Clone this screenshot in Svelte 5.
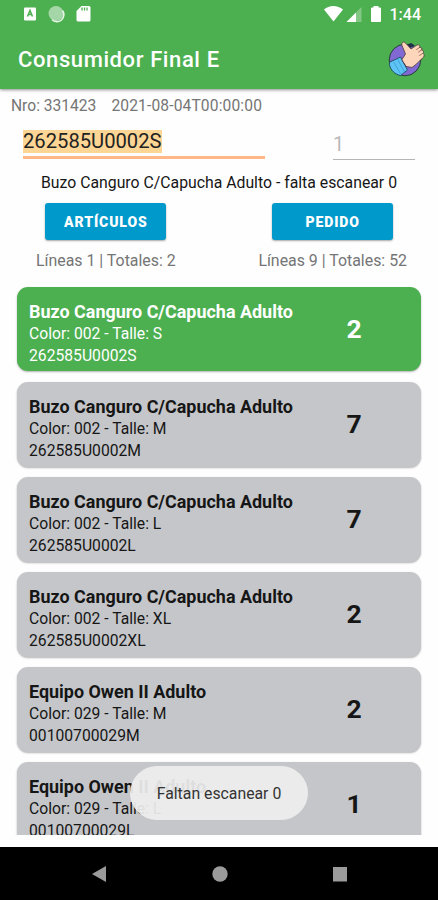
<script lang="ts">
  type Item = {
    name: string;
    color: string;
    size: string;
    code: string;
    pending: number;
    active?: boolean;
  };

  let code = '262585U0002S';
  let message = 'Buzo Canguro C/Capucha Adulto - falta escanear 0';
  let toast = 'Faltan escanear 0';

  const items: Item[] = [
    { name: 'Buzo Canguro C/Capucha Adulto', color: '002', size: 'S', code: '262585U0002S', pending: 2, active: true },
    { name: 'Buzo Canguro C/Capucha Adulto', color: '002', size: 'M', code: '262585U0002M', pending: 7 },
    { name: 'Buzo Canguro C/Capucha Adulto', color: '002', size: 'L', code: '262585U0002L', pending: 7 },
    { name: 'Buzo Canguro C/Capucha Adulto', color: '002', size: 'XL', code: '262585U0002XL', pending: 2 },
    { name: 'Equipo Owen II Adulto', color: '029', size: 'M', code: '00100700029M', pending: 2 },
    { name: 'Equipo Owen II Adulto', color: '029', size: 'L', code: '00100700029L', pending: 1 }
  ];
</script>

<div class="screen">
  <header>
    <div class="status">
      <svg width="72" height="18" viewBox="0 0 72 18">
        <rect x="1" y="2.500" width="12" height="13" rx="1" fill="#fff" />
        <path d="M4.500 11.500 7 5.500l2.500 6M5.500 9.500h3" fill="none" stroke="#4caf50" stroke-width="1.500" />
        <circle cx="33" cy="8.500" r="7.500" fill="#a5d6a7" />
        <path d="M39.500 5.500A7 7 0 0 1 29 14.700" fill="none" stroke="#e8f5e9" stroke-width="1.500" />
        <path d="M58.500 1H66a1.500 1.500 0 0 1 1.500 1.500V15a1.500 1.500 0 0 1-1.500 1.500H55a1.500 1.500 0 0 1-1.500-1.500V6z" fill="#fff" />
        <path d="M59 2.500v3M61.500 2.500v3M64 2.500v3" stroke="#4caf50" stroke-width="1.300" />
      </svg>
      <div class="status-right">
        <svg width="60" height="18" viewBox="0 0 60 18">
          <path d="M1 4.500C6-.2 14.500-.2 20 4.500L10.500 16.500z" fill="#fff" />
          <path d="M38.500 2v15h-15z" fill="#fff" fill-opacity=".3" />
          <path d="M33 7.500V17h-9.500z" fill="#fff" />
          <path d="M50.500 1h5v1.500H57a1 1 0 0 1 1 1V16a1 1 0 0 1-1 1h-8a1 1 0 0 1-1-1V3.500a1 1 0 0 1 1-1h1.500z" fill="#fff" />
        </svg>
        <span class="clock">1:44</span>
      </div>
    </div>
    <div class="toolbar">
      <h1>Consumidor Final E</h1>
      <svg width="38" height="38" viewBox="0 0 38 38" stroke-linejoin="round" stroke-linecap="round">
        <circle cx="18" cy="20" r="15.800" fill="#8268d2" stroke="#23452f" stroke-width="1" />
        <path d="M3 22 13.500 17l7 13-7 5.500C8 34.500 3.500 30 2.500 25z" fill="#5ec4f5" stroke="#25506e" stroke-width="1" />
        <path d="M10.500 19l7 13M7 22.500l6.500 11" fill="none" stroke="#3a9bd0" stroke-width=".8" />
        <path d="M20 4.500l3 3.500 5-2.500L24 3z" fill="#23304a" />
        <path d="M15 19.500 18.500 14 15 5.500C14 2.500 16.500 1 18.500 3l5.500 6L30 5c2-.8 3.500.8 2.500 2.500 2-.5 3 1 2 2.500 2 0 2.700 2 1.500 3.500 1.800 1 1.500 3.500-.5 4.500l-6 6-4.500 3.500-5.500-1z" fill="#fdd5ba" stroke="#4b3b3b" stroke-width=".8" />
        <path d="m32.500 7.500-3 2M34.500 10l-3 2M35.500 13.500l-3 2" fill="none" stroke="#8c5c50" stroke-width=".8" />
      </svg>
    </div>
  </header>

  <main>
    <div class="order">
      <span>Nro: 331423</span>
      <span class="date">2021-08-04T00:00:00</span>
    </div>

    <div class="inputs">
      <div class="field code"><mark>{code}</mark></div>
      <div class="field qty">1</div>
    </div>

    <p class="message">{message}</p>

    <div class="actions">
      <div class="action">
        <button>ARTÍCULOS</button>
        <span>Líneas 1 | Totales: 2</span>
      </div>
      <div class="action">
        <button>PEDIDO</button>
        <span>Líneas 9 | Totales: 52</span>
      </div>
    </div>

    <div class="list">
      {#each items as item}
        <div class="card" class:active={item.active}>
          <div class="info">
            <strong>{item.name}</strong>
            <span>Color: {item.color} - Talle: {item.size}</span>
            <span>{item.code}</span>
          </div>
          <div class="pending">{item.pending}</div>
        </div>
      {/each}
    </div>
  </main>

  <div class="toast">{toast}</div>

  <nav>
    <svg width="16" height="16" viewBox="0 0 16 16"><path d="M15 0v16L1 8z" fill="#9b9b9b" /></svg>
    <svg width="16" height="16" viewBox="0 0 16 16"><circle cx="8" cy="8" r="7.700" fill="#9b9b9b" /></svg>
    <svg width="16" height="16" viewBox="0 0 16 16"><rect x="1" y="1" width="14" height="14.500" fill="#9b9b9b" /></svg>
  </nav>
</div>

<style>
  :global(body) {
    margin: 0;
    background: #fff;
  }

  .screen {
    position: relative;
    display: flex;
    flex-direction: column;
    width: 438px;
    height: 900px;
    overflow: hidden;
    background: #fefefe;
    font-family: Roboto, sans-serif;
    color: #161616;
    white-space: nowrap;
  }

  header {
    height: 89px;
    flex: none;
    background: #4caf50;
    box-shadow: 0 1px 3px rgba(0, 0, 0, 0.45);
    color: #fff;
  }

  .status {
    display: flex;
    justify-content: space-between;
    height: 28px;
    box-sizing: border-box;
    padding: 5px 17px 0 23px;
  }

  .status-right {
    display: flex;
    gap: 7px;
  }

  .clock {
    font-size: 16px;
    font-weight: 500;
    line-height: 19px;
  }

  .toolbar {
    display: flex;
    align-items: center;
    justify-content: space-between;
    height: 61px;
    padding: 0 13px 0 18px;
  }

  h1 {
    margin: 2px 0 0;
    font-size: 22px;
    font-weight: 500;
    letter-spacing: 0.6px;
  }

  main {
    flex: none;
    height: 746px;
    overflow: hidden;
  }

  .order {
    display: flex;
    gap: 15px;
    padding: 7px 11px 0;
    font-size: 15.6px;
    line-height: 20px;
    color: #757575;
  }

  .date {
    letter-spacing: 0.13px;
  }

  .inputs {
    display: flex;
    justify-content: space-between;
    height: 44px;
    padding: 0 23px;
  }

  .field {
    box-sizing: border-box;
  }

  .code {
    width: 242px;
    height: 43px;
    padding-top: 14px;
    border-bottom: 3px solid #ffb787;
    font-size: 20.2px;
    line-height: 23px;
  }

  mark {
    display: inline-block;
    height: 23px;
    background: #fdd594;
    color: #222;
  }

  .qty {
    width: 82px;
    height: 44px;
    padding-top: 16px;
    border-bottom: 1px solid #b5b5b5;
    font-size: 20px;
    line-height: 24px;
    color: #bbb;
  }

  .message {
    margin: 13px 0 0;
    font-size: 15.8px;
    line-height: 20px;
    text-align: center;
  }

  .actions {
    display: flex;
    justify-content: space-between;
    margin-top: 10px;
    padding: 0 31px 0 36px;
  }

  .action {
    display: flex;
    flex-direction: column;
    align-items: center;
    gap: 11px;
    font-size: 15.9px;
    line-height: 20px;
    color: #757575;
  }

  button {
    width: 121px;
    height: 37px;
    padding: 0;
    border: none;
    border-radius: 3px;
    background: #0099cc;
    box-shadow: 0 1px 2px rgba(0, 0, 0, 0.35);
    color: #fff;
    font: 900 14px Roboto, sans-serif;
    letter-spacing: 0.9px;
  }

  .list {
    padding: 16px 17px 0;
  }

  .card {
    display: flex;
    justify-content: space-between;
    box-sizing: border-box;
    height: 85px;
    margin-bottom: 10px;
    padding: 14px 57px 0 12px;
    border-radius: 11px;
    background: #c5c6ca;
    box-shadow: 0 1px 2px rgba(0, 0, 0, 0.3);
  }

  .card.active {
    height: 84px;
    margin-bottom: 11px;
    background: #4caf50;
    color: #fff;
  }

  .info {
    display: flex;
    flex-direction: column;
    font-size: 15.7px;
    line-height: 21.5px;
  }

  .info strong {
    font-size: 17.95px;
    font-weight: 700;
    line-height: 22px;
  }

  .pending {
    width: 20px;
    padding-top: 12px;
    font-size: 26.5px;
    font-weight: 700;
    line-height: 32px;
    text-align: center;
  }

  .toast {
    position: absolute;
    left: 130px;
    top: 766px;
    width: 178px;
    height: 54px;
    border-radius: 27px;
    background: rgba(238, 238, 238, 0.93);
    font-size: 15.8px;
    line-height: 56px;
    text-align: center;
    color: #333;
  }

  nav {
    display: flex;
    align-items: center;
    justify-content: space-between;
    box-sizing: border-box;
    height: 53px;
    margin-top: auto;
    padding: 0 90px 0 91px;
    background: #000;
  }
</style>
